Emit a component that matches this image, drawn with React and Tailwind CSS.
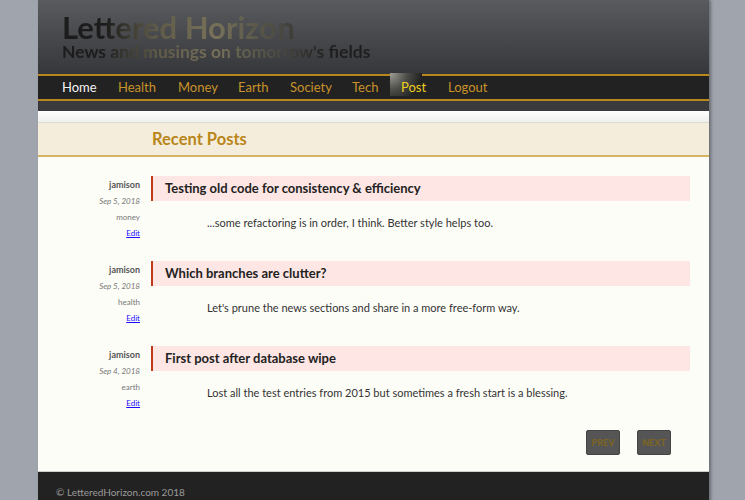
import React from "react";

const navItems = [
  { label: "Home", w: "w-[56px]" },
  { label: "Health", w: "w-[60px]" },
  { label: "Money", w: "w-[60px]" },
  { label: "Earth", w: "w-[52px]" },
  { label: "Society", w: "w-[62px]" },
  { label: "Tech", w: "w-[49px]" },
  { label: "Post", w: "w-[47px]" },
  { label: "Logout", w: "w-[60px]" },
];

const posts = [
  {
    id: 1,
    author: "jamison",
    date: "Sep 5, 2018",
    category: "money",
    title: "Testing old code for consistency & efficiency",
    excerpt: "...some refactoring is in order, I think. Better style helps too.",
  },
  {
    id: 2,
    author: "jamison",
    date: "Sep 5, 2018",
    category: "health",
    title: "Which branches are clutter?",
    excerpt: "Let's prune the news sections and share in a more free-form way.",
  },
  {
    id: 3,
    author: "jamison",
    date: "Sep 4, 2018",
    category: "earth",
    title: "First post after database wipe",
    excerpt: "Lost all the test entries from 2015 but sometimes a fresh start is a blessing.",
  },
];

const font = { fontFamily: 'Lato, "Noto Sans", sans-serif' };

function NavLink({ label, w }) {
  if (label === "Home") {
    return <span className={`${w} text-[#f2f2f2]`}>{label}</span>;
  }
  if (label === "Post") {
    return (
      <span className={`${w} relative text-[#f0d020]`}>
        <span className="absolute -left-[11px] -top-[5px] h-[23px] w-[32px] bg-[radial-gradient(circle_at_0%_0%,#a09f95_0%,#4a4a46_45%,#222_80%)]" />
        <span className="relative">{label}</span>
      </span>
    );
  }
  return <span className={`${w} text-[#c8932a]`}>{label}</span>;
}

export default function App() {
  return (
    <div className="min-h-screen bg-[#a0a4ad]" style={font}>
      <div className="mx-[38px] w-[671px] min-h-[500px] bg-[#fdfdf8] shadow-[2px_0_3px_rgba(0,0,0,0.35)]">
        <header className="h-[74px] bg-gradient-to-b from-[#5a5b5f] to-[#36373a] pl-[24px] pt-[12px]">
          <div className="inline-block bg-[linear-gradient(90deg,#1c1c1c_0%,#1c1c1c_14%,#5e5a48_30%,#777159_50%,#4c4b44_70%,#1e1e1e_86%)] bg-clip-text text-transparent">
            <div className="text-[31px] font-bold leading-[30px]">Lettered Horizon</div>
            <div className="mt-[1px] text-[17.5px] font-bold leading-[18px]">
              News and musings on tomorrow's fields
            </div>
          </div>
        </header>
        <nav className="flex h-[27px] items-center border-y-2 border-[#b8881e] bg-[#222222] pl-[24px] text-[13px]">
          {navItems.map((item) => (
            <NavLink key={item.label} label={item.label} w={item.w} />
          ))}
        </nav>
        <div className="h-[10px] bg-[#3a3a3c]" />
        <div className="h-[12px] border-b border-[#dcdcd6] bg-gradient-to-b from-white to-[#efefec]" />
        <div className="flex h-[34px] items-center border-b-2 border-[#d6b463] bg-[#f5eddb] pl-[114px]">
          <h1 className="text-[16.5px] font-bold text-[#b8861a]">Recent Posts</h1>
        </div>

        <main className="pt-[19px]">
          {posts.map((post) => (
            <article key={post.id} className="flex h-[85px]">
              <div className="w-[102px] pt-[1px] text-right text-[8px] leading-[16px] text-[#666]">
                <div className="text-[9px] font-bold text-[#555]">{post.author}</div>
                <div className="italic text-[#777]">{post.date}</div>
                <div className="text-[#777]">{post.category}</div>
                <a href="#" className="text-[#1a0dff] underline">
                  Edit
                </a>
              </div>
              <div className="ml-[11px] w-[539px]">
                <h2 className="flex h-[25px] items-center border-l-2 border-[#c0391b] bg-[#fde6e3] pl-[12px] text-[13px] font-bold text-[#222]">
                  {post.title}
                </h2>
                <p className="mt-[14px] pl-[56px] text-[11px] text-[#333]">{post.excerpt}</p>
              </div>
            </article>
          ))}
        </main>

        <div className="-mt-[1px] flex justify-end gap-[17px] pr-[38px]">
          <button className="h-[25px] w-[34px] rounded-[2px] border border-[#444] bg-[#555] text-[9px] font-black text-[#7b6424]">
            PREV
          </button>
          <button className="h-[25px] w-[34px] rounded-[2px] border border-[#444] bg-[#555] text-[9px] font-black text-[#7b6424]">
            NEXT
          </button>
        </div>

        <footer className="mt-[16px] h-[40px] border-t border-[#ccc] bg-[#222] pl-[18px] pt-[14px] text-[10px] leading-[12px] text-[#9a9a9a]">
          © LetteredHorizon.com 2018
        </footer>
      </div>
    </div>
  );
}
